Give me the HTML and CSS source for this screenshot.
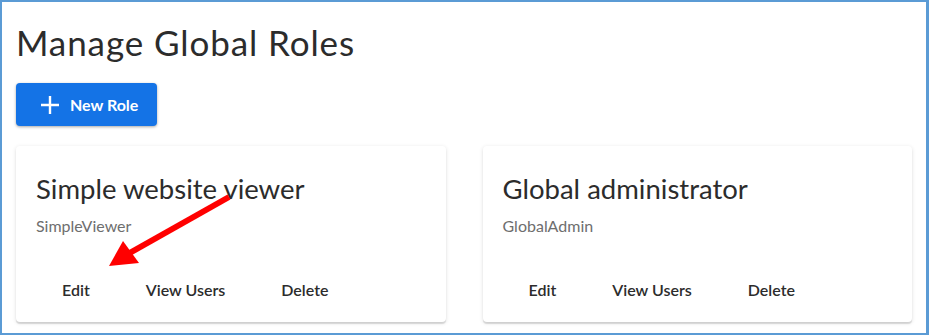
FILE: index.html
```html
<!DOCTYPE html>
<html lang="en">
<head>
    <meta charset="UTF-8">
    <meta name="viewport" content="width=device-width, initial-scale=1.0">
    <title>Manage Global Roles</title>
    <link rel="stylesheet" href="styles.css">
</head>
<body>
    <div class="frame">
        <h1 class="page-title">Manage Global Roles</h1>
        <button class="new-role">
            <svg class="plus" width="20" height="20" viewBox="0 0 20 20" aria-hidden="true">
                <path d="M10 1v18M1 10h18" stroke="#fff" stroke-width="2.4" fill="none"/>
            </svg>
            New Role
        </button>

        <div class="cards">
            <div class="card">
                <div class="card-title">Simple website viewer</div>
                <div class="card-id">SimpleViewer</div>
                <div class="card-actions">
                    <button class="action">Edit</button>
                    <button class="action">View Users</button>
                    <button class="action">Delete</button>
                </div>
            </div>
            <div class="card">
                <div class="card-title">Global administrator</div>
                <div class="card-id">GlobalAdmin</div>
                <div class="card-actions">
                    <button class="action">Edit</button>
                    <button class="action">View Users</button>
                    <button class="action">Delete</button>
                </div>
            </div>
        </div>

        <!-- annotation arrow pointing at Edit -->
        <svg class="callout" width="929" height="335" viewBox="0 0 929 335" aria-hidden="true">
            <line x1="229" y1="197" x2="126" y2="255" stroke="#f00" stroke-width="6"/>
            <polygon points="109,266 123,241 139,263" fill="#f00"/>
        </svg>
    </div>
</body>
</html>
```

FILE: styles.css
```css
body {
    margin: 0;
    padding: 0;
    font-family: Lato, 'Noto Sans', sans-serif;
    background-color: #fff;
}

.frame {
    position: relative;
    box-sizing: border-box;
    width: 929px;
    height: 335px;
    border: 2px solid #5b9bd5;
    border-right-width: 3px;
    padding: 18px 14px 0 14px;
    background-color: #fff;
}

.page-title {
    margin: 0;
    font-size: 35px;
    font-weight: 400;
    letter-spacing: 0.9px;
    line-height: 44px;
    color: #2c2c2c;
}

.new-role {
    display: flex;
    align-items: center;
    gap: 10px;
    margin-top: 19px;
    height: 43px;
    padding: 0 19px 0 24px;
    border: none;
    border-radius: 4px;
    background-color: #1473e6;
    color: #fff;
    font-family: inherit;
    font-size: 16px;
    font-weight: 700;
    box-shadow: 0 1px 3px rgba(0, 0, 0, 0.35);
}

.cards {
    display: flex;
    gap: 37px;
    margin-top: 20px;
}

.card {
    box-sizing: border-box;
    width: 430px;
    height: 176px;
    padding: 26px 20px 0 20px;
    border-radius: 4px;
    background-color: #fff;
    box-shadow: 0 1px 4px rgba(0, 0, 0, 0.12), 0 2px 1px rgba(0, 0, 0, 0.12);
}

.card-title {
    font-size: 27.5px;
    line-height: 34px;
    color: #2c2c2c;
}

.card-id {
    margin-top: 10px;
    font-size: 16px;
    line-height: 20px;
    color: #6e6e6e;
}

.card-actions {
    display: flex;
    gap: 4px;
    margin-top: 37px;
}

.action {
    height: 32px;
    padding: 0 26px;
    border: none;
    background: none;
    font-family: inherit;
    font-size: 16px;
    font-weight: 600;
    color: #2c2c2c;
}

.callout {
    position: absolute;
    top: -2px;
    left: -2px;
    pointer-events: none;
}
```
